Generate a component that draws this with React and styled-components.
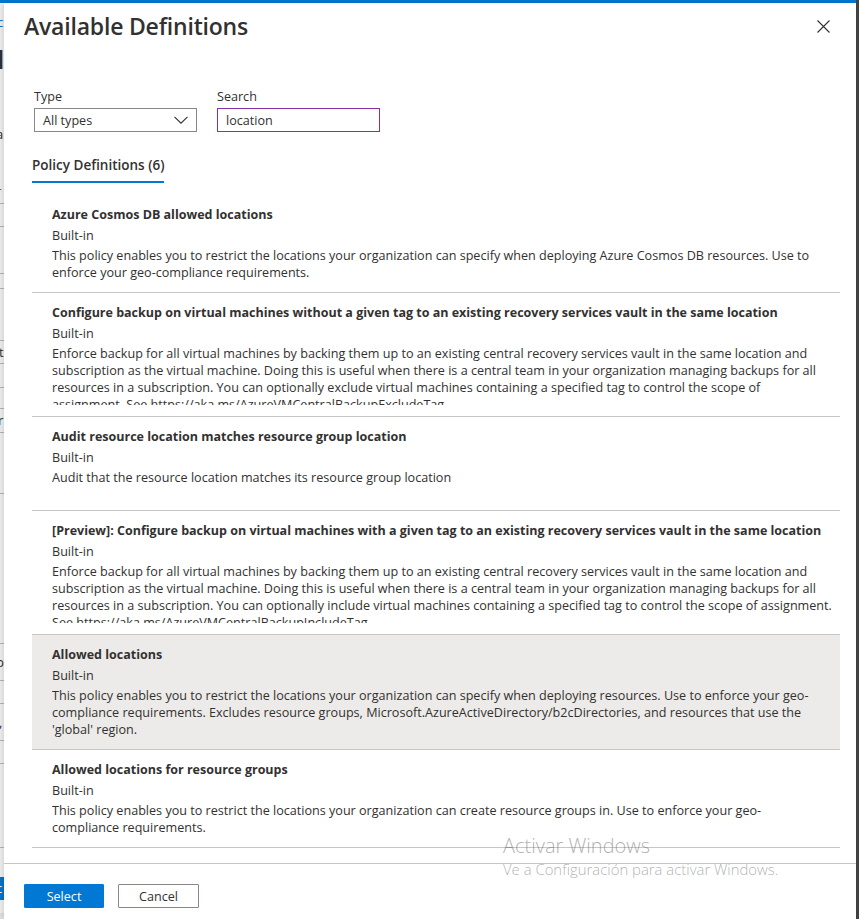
import React from "react";
import styled, { createGlobalStyle } from "styled-components";

const GlobalStyle = createGlobalStyle`
  html, body { margin: 0; padding: 0; background: #fff; }
  body { font-family: "Open Sans", "Noto Sans", sans-serif; color: #323130; }
  * { box-sizing: border-box; }
`;

const Screen = styled.div`
  position: relative;
  display: flex;
  width: 859px;
  height: 919px;
  overflow: hidden;
  background: #fff;
`;

const Main = styled.div`
  display: flex;
  flex-direction: column;
  flex: 1;
  min-width: 0;
`;

const TopBar = styled.div`
  height: 3px;
  flex: none;
  background: #0078d4;
`;

const Workspace = styled.div`
  display: flex;
  flex: 1;
  min-height: 0;
`;

const Edge = styled.div`
  width: 3px;
  flex: none;
  background: #424242;
`;

const Backdrop = styled.div`
  width: 4px;
  flex: none;
  overflow: hidden;
  display: flex;
  flex-direction: column;
  background: #f6f6f6;
`;

const BackdropRow = styled.div`
  flex: ${(p) => (p.$fill ? "1" : "none")};
  height: ${(p) => p.$h || 0}px;
  line-height: ${(p) => (p.$h || 16) - 1}px;
  border-bottom: ${(p) => (p.$line ? "1px solid #b8b8b8" : "none")};
  background: ${(p) => p.$bg || "transparent"};
  color: ${(p) => p.$color || "#323130"};
  font-size: ${(p) => p.$size || 13}px;
  font-weight: ${(p) => p.$weight || 400};
  white-space: nowrap;
  text-indent: ${(p) => p.$shift || -3}px;
`;

const Panel = styled.section`
  position: relative;
  flex: 1;
  min-width: 0;
  display: flex;
  flex-direction: column;
  background: #fff;
  box-shadow: -3px 0 5px rgba(0, 0, 0, 0.13);
`;

const Header = styled.header`
  display: flex;
  align-items: flex-start;
  justify-content: space-between;
  height: 38px;
  padding: 8px 26px 0 20px;
  flex: none;
`;

const Title = styled.h1`
  margin: 0;
  font-size: 23px;
  line-height: 30px;
  font-weight: 600;
  color: #323130;
  letter-spacing: -0.2px;
`;

const CloseButton = styled.button`
  display: flex;
  width: 13px;
  height: 13px;
  margin-top: 9px;
  padding: 0;
  border: none;
  background: none;
  cursor: pointer;
`;

const Filters = styled.div`
  display: flex;
  gap: 20px;
  padding: 47px 0 0 30px;
  flex: none;
`;

const Field = styled.label`
  display: flex;
  flex-direction: column;
  gap: 2px;
  width: 163px;
`;

const FieldLabel = styled.span`
  font-size: 12.6px;
  line-height: 18px;
  color: #323130;
`;

const Dropdown = styled.div`
  display: flex;
  align-items: center;
  justify-content: space-between;
  height: 24px;
  padding: 0 8px 0 8px;
  border: 1px solid #8a8886;
  font-size: 12.6px;
  color: #323130;
`;

const SearchInput = styled.input`
  height: 24px;
  width: 100%;
  padding: 0 8px;
  border: 1px solid #8b2fa6;
  outline: none;
  font-family: inherit;
  font-size: 12.6px;
  color: #323130;
  background: #fff;
`;

const Tabs = styled.nav`
  display: flex;
  padding: 23px 0 0 28px;
  flex: none;
`;

const Tab = styled.div`
  font-size: 13.5px;
  line-height: 20px;
  font-weight: 600;
  color: #323130;
  padding-bottom: 6px;
  border-bottom: 2px solid ${(p) => (p.$active ? "#0078d4" : "transparent")};
`;

const ScrollArea = styled.div`
  flex: 1;
  min-height: 0;
  overflow: hidden;
  padding: 12px 16px 0 28px;
`;

const List = styled.ul`
  margin: 0;
  padding: 0;
  list-style: none;
`;

const Item = styled.li`
  min-height: 94px;
  padding: 10px 9px 11px 20px;
  border-bottom: 1px solid #c8c6c4;
  background: ${(p) => (p.$selected ? "#edebe9" : "transparent")};
`;

const ItemTitle = styled.div`
  font-size: 12.5px;
  line-height: 20px;
  font-weight: 700;
  color: #323130;
`;

const ItemType = styled.div`
  margin-top: 1px;
  font-size: 12.6px;
  line-height: 20px;
  color: #323130;
`;

const ItemDesc = styled.div`
  margin-top: 1px;
  max-height: 60px;
  overflow: hidden;
  font-size: 12.6px;
  line-height: 17px;
  color: #323130;
`;

const DescLine = styled.span`
  display: block;
  white-space: nowrap;
`;

const Footer = styled.footer`
  display: flex;
  gap: 14px;
  padding: 20px 20px 11px;
  border-top: 1px solid #c8c6c4;
  flex: none;
`;

const Button = styled.button`
  height: 24px;
  width: ${(p) => (p.$primary ? 80 : 81)}px;
  padding: 0;
  font-family: inherit;
  font-size: 12.6px;
  color: ${(p) => (p.$primary ? "#fff" : "#323130")};
  background: ${(p) => (p.$primary ? "#0078d4" : "#fff")};
  border: 1px solid ${(p) => (p.$primary ? "#0078d4" : "#8a8886")};
  border-radius: 1px;
  cursor: pointer;
`;

const Watermark = styled.div`
  position: absolute;
  left: 503px;
  top: 833px;
  pointer-events: none;
  color: rgba(95, 95, 95, 0.5);
`;

const WatermarkTitle = styled.div`
  font-size: 20px;
  line-height: 26px;
  font-weight: 300;
`;

const WatermarkText = styled.div`
  font-size: 14.9px;
  line-height: 20px;
  font-weight: 300;
`;

const backdropRows = [
  { h: 12 },
  { h: 16, text: "c", color: "#0078d4" },
  { h: 17 },
  { h: 24, text: "I", size: 26, weight: 700, shift: -4 },
  { h: 54 },
  { h: 18, text: "a", shift: -4 },
  { h: 39 },
  { h: 18, text: "r", color: "#0078d4", shift: -4 },
  { h: 3, line: true },
  { h: 23, line: true },
  { h: 47, line: true },
  { h: 15, line: true },
  { h: 52, line: true },
  { h: 23, line: true, text: "t", shift: -1 },
  { h: 24, line: true },
  { h: 21, line: true },
  { h: 24, line: true, text: "r", shift: -2 },
  { h: 61, line: true },
  { h: 150, line: true },
  { h: 37, line: true, text: "p", shift: -4 },
  { h: 23, line: true },
  { h: 37, line: true, text: ",", shift: -1 },
  { h: 23, line: true },
  { h: 84, line: true },
  { h: 29 },
  { h: 23, text: "c", color: "#fff", bg: "#0078d4", shift: -4 },
  { h: 13 },
  { fill: true, bg: "#e6e6e6" },
];

const definitions = [
  {
    title: "Azure Cosmos DB allowed locations",
    desc: [
      "This policy enables you to restrict the locations your organization can specify when deploying Azure Cosmos DB resources. Use to",
      "enforce your geo-compliance requirements.",
    ],
  },
  {
    title:
      "Configure backup on virtual machines without a given tag to an existing recovery services vault in the same location",
    desc: [
      "Enforce backup for all virtual machines by backing them up to an existing central recovery services vault in the same location and",
      "subscription as the virtual machine. Doing this is useful when there is a central team in your organization managing backups for all",
      "resources in a subscription. You can optionally exclude virtual machines containing a specified tag to control the scope of",
      "assignment. See https://aka.ms/AzureVMCentralBackupExcludeTag",
    ],
  },
  {
    title: "Audit resource location matches resource group location",
    desc: ["Audit that the resource location matches its resource group location"],
  },
  {
    title:
      "[Preview]: Configure backup on virtual machines with a given tag to an existing recovery services vault in the same location",
    desc: [
      "Enforce backup for all virtual machines by backing them up to an existing central recovery services vault in the same location and",
      "subscription as the virtual machine. Doing this is useful when there is a central team in your organization managing backups for all",
      "resources in a subscription. You can optionally include virtual machines containing a specified tag to control the scope of assignment.",
      "See https://aka.ms/AzureVMCentralBackupIncludeTag",
    ],
  },
  {
    title: "Allowed locations",
    desc: [
      "This policy enables you to restrict the locations your organization can specify when deploying resources. Use to enforce your geo-",
      "compliance requirements. Excludes resource groups, Microsoft.AzureActiveDirectory/b2cDirectories, and resources that use the",
      "'global' region.",
    ],
    selected: true,
  },
  {
    title: "Allowed locations for resource groups",
    desc: [
      "This policy enables you to restrict the locations your organization can create resource groups in. Use to enforce your geo-",
      "compliance requirements.",
    ],
  },
];

function CloseIcon() {
  return (
    <svg width="13" height="13" viewBox="0 0 13 13">
      <path d="M0.5 0.5 L12.5 12.5 M12.5 0.5 L0.5 12.5" stroke="#323130" strokeWidth="1.1" fill="none" />
    </svg>
  );
}

function ChevronIcon() {
  return (
    <svg width="14" height="8" viewBox="0 0 14 8">
      <path d="M0.5 0.8 L7 7.2 L13.5 0.8" stroke="#323130" strokeWidth="1.1" fill="none" />
    </svg>
  );
}

export default function App() {
  return (
    <>
      <GlobalStyle />
      <Screen>
        <Main>
          <TopBar />
          <Workspace>
            <Backdrop>
              {backdropRows.map((r, i) => (
                <BackdropRow
                  key={i}
                  $h={r.h}
                  $line={r.line}
                  $bg={r.bg}
                  $color={r.color}
                  $size={r.size}
                  $weight={r.weight}
                  $shift={r.shift}
                  $fill={r.fill}
                >
                  {r.text}
                </BackdropRow>
              ))}
            </Backdrop>
            <Panel>
              <Header>
                <Title>Available Definitions</Title>
                <CloseButton aria-label="Close">
                  <CloseIcon />
                </CloseButton>
              </Header>
              <Filters>
                <Field>
                  <FieldLabel>Type</FieldLabel>
                  <Dropdown>
                    <span>All types</span>
                    <ChevronIcon />
                  </Dropdown>
                </Field>
                <Field>
                  <FieldLabel>Search</FieldLabel>
                  <SearchInput defaultValue="location" />
                </Field>
              </Filters>
              <Tabs>
                <Tab $active>Policy Definitions (6)</Tab>
              </Tabs>
              <ScrollArea>
                <List>
                  {definitions.map((d) => (
                    <Item key={d.title} $selected={d.selected}>
                      <ItemTitle>{d.title}</ItemTitle>
                      <ItemType>Built-in</ItemType>
                      <ItemDesc>
                        {d.desc.map((line) => (
                          <DescLine key={line}>{line}</DescLine>
                        ))}
                      </ItemDesc>
                    </Item>
                  ))}
                </List>
              </ScrollArea>
              <Footer>
                <Button $primary>Select</Button>
                <Button>Cancel</Button>
              </Footer>
            </Panel>
          </Workspace>
        </Main>
        <Edge />
        <Watermark>
          <WatermarkTitle>Activar Windows</WatermarkTitle>
          <WatermarkText>Ve a Configuración para activar Windows.</WatermarkText>
        </Watermark>
      </Screen>
    </>
  );
}
